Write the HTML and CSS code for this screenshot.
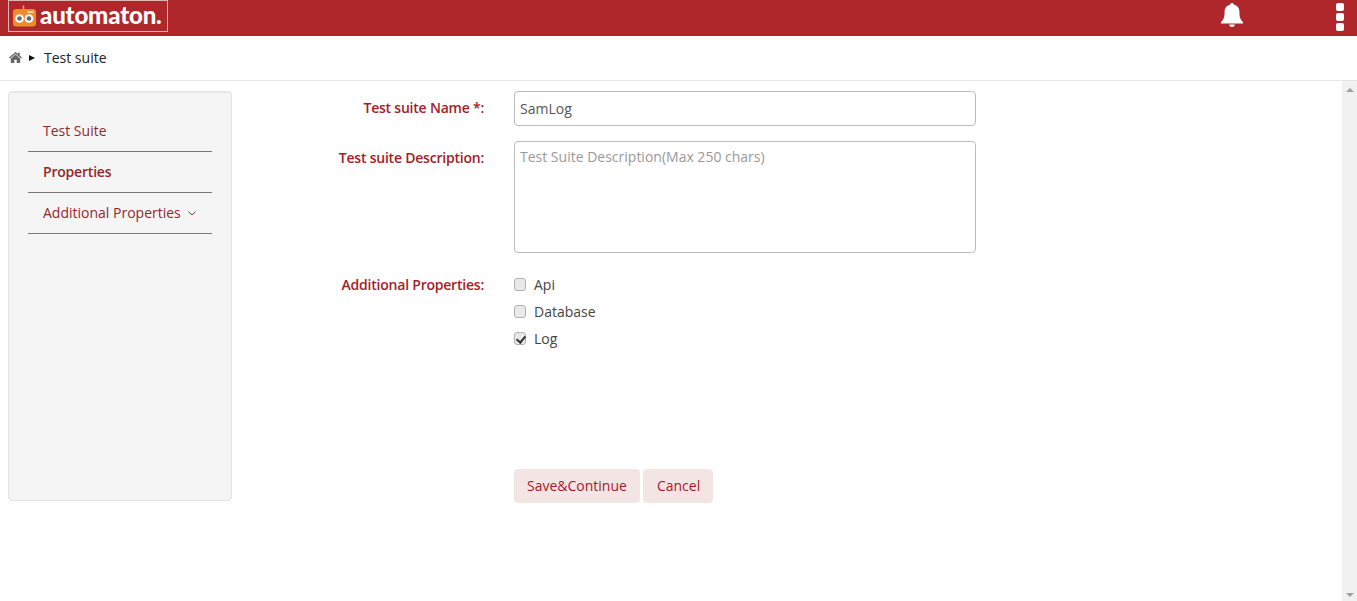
FILE: index.html
```html
<!DOCTYPE html>
<html lang="en">
<head>
<meta charset="utf-8">
<title>Test suite</title>
<link rel="stylesheet" href="styles.css">
</head>
<body>
<header class="topbar">
  <div class="logo">
    <svg class="logo-icon" width="24" height="22" viewBox="0 0 24 22">
      <path d="M10.500 5V.5" stroke="#f3b27a" stroke-width="1.4"/>
      <rect x="0" y="4" width="23" height="17.500" rx="3" fill="#ee8b2c"/>
      <rect x="14.500" y="6" width="6" height="2" fill="#f9d7b0"/>
      <circle cx="6.500" cy="13.500" r="4.300" fill="#fff"/>
      <circle cx="6.500" cy="13.500" r="2.300" fill="#666"/>
      <circle cx="16" cy="13.500" r="4.300" fill="#fff"/>
      <circle cx="16" cy="13.500" r="2.300" fill="#666"/>
    </svg>
    <span class="logo-text">automaton.</span>
  </div>
  <div class="topbar-actions">
    <svg class="bell" width="22" height="24" viewBox="0 0 22 24">
      <path d="M11 0c1.100 0 1.900.8 1.900 1.800 3.700.7 5.500 3.500 5.500 7.200 0 5.300 1.200 7.800 3.600 10v1.500H0V19c2.400-2.200 3.600-4.700 3.600-10 0-3.700 1.800-6.500 5.500-7.200C9.100.8 9.900 0 11 0z" fill="#fff"/>
      <path d="M8.200 21.500h5.600c0 1.500-1.200 2.500-2.800 2.500s-2.800-1-2.800-2.500z" fill="#fff"/>
    </svg>
    <div class="kebab"><i></i><i></i><i></i></div>
  </div>
</header>
<nav class="crumbs">
  <svg class="home" width="13" height="11" viewBox="0 0 13 11">
    <path d="M6.500 0L0 5.600l.8.9L6.500 1.700l5.700 4.800.8-.9-2.300-2V.8H9v1.300z" fill="#666"/>
    <path d="M6.500 2.600L1.800 6.500V11h3.500V7.700h2.400V11h3.500V6.500z" fill="#666"/>
  </svg>
  <span class="crumb-arrow"></span>
  <span class="crumb-text">Test suite</span>
</nav>
<div class="content">
  <main class="page">
    <aside class="side">
      <a class="side-item">Test Suite</a>
      <a class="side-item active">Properties</a>
      <a class="side-item">Additional Properties
        <svg class="chev" width="8" height="5" viewBox="0 0 8 5"><path d="M.5.7L4 4l3.500-3.300" fill="none" stroke="#8f2a3a" stroke-width="1"/></svg>
      </a>
    </aside>
    <form class="form">
      <div class="row row-name">
        <label class="lbl lbl-name">Test suite Name *:</label>
        <input class="input" type="text" value="SamLog">
      </div>
      <div class="row row-desc">
        <label class="lbl lbl-desc">Test suite Description:</label>
        <textarea class="input area" placeholder="Test Suite Description(Max 250 chars)"></textarea>
      </div>
      <div class="row row-props">
        <label class="lbl lbl-props">Additional Properties:</label>
        <div class="checks">
          <label class="check"><input type="checkbox">Api</label>
          <label class="check"><input type="checkbox">Database</label>
          <label class="check"><input type="checkbox" checked>Log</label>
        </div>
      </div>
      <div class="actions">
        <button type="button" class="btn">Save&amp;Continue</button>
        <button type="button" class="btn btn-cancel">Cancel</button>
      </div>
    </form>
  </main>
  <div class="scrollbar">
    <span class="sb-up"></span>
    <span class="sb-down"></span>
  </div>
</div>
</body>
</html>
```
FILE: styles.css
```css
* { box-sizing: border-box; }
html, body { margin: 0; height: 100%; overflow: hidden; }
body {
  font-family: "Open Sans", "Noto Sans", sans-serif;
  font-size: 14px;
  color: #333;
  background: #fff;
  height: 601px;
  display: flex;
  flex-direction: column;
}
.topbar {
  height: 36px;
  flex: none;
  background: #b0272b;
  display: flex;
  justify-content: space-between;
  padding-left: 8px;
}
.logo {
  width: 160px;
  height: 32px;
  border: 1px solid #dfb4b4;
  display: flex;
  align-items: center;
  padding: 0 0 2px 4px;
  gap: 3px;
}
.logo-icon { flex: none; align-self: flex-start; margin-top: 4px; }
.logo-text {
  font-family: Lato, "Liberation Sans", Arial, sans-serif;
  font-weight: 900;
  font-size: 24px;
  letter-spacing: -0.15px;
  color: #fff;
  line-height: 30px;
}
.topbar-actions {
  display: flex;
  align-items: flex-start;
}
.bell { margin-top: 3px; margin-right: 93px; }
.kebab {
  display: flex;
  flex-direction: column;
  gap: 2px;
  margin-top: 3px;
  margin-right: 13px;
}
.kebab i {
  display: block;
  width: 8px;
  height: 8px;
  border-radius: 2px;
  background: #fff;
}
.crumbs {
  height: 45px;
  flex: none;
  border-bottom: 1px solid #e5e5e5;
  display: flex;
  align-items: center;
  padding-left: 9px;
  padding-bottom: 1px;
}
.home { flex: none; }
.crumb-arrow {
  width: 0;
  height: 0;
  margin-left: 7px;
  border-left: 6px solid #111;
  border-top: 3px solid transparent;
  border-bottom: 3px solid transparent;
}
.crumb-text { margin-left: 9px; color: #222; }
.content { flex: 1; display: flex; min-height: 0; }
.page {
  flex: 1;
  display: flex;
  align-items: flex-start;
  padding: 10px 0 0 8px;
}
.side {
  width: 224px;
  height: 410px;
  flex: none;
  background: #f5f5f5;
  border: 1px solid #e3e3e3;
  border-radius: 4px;
  padding: 19px 19px 0;
  box-shadow: inset 0 1px 1px rgba(0,0,0,.05);
}
.side-item {
  display: block;
  height: 41px;
  line-height: 40px;
  padding-left: 15px;
  border-bottom: 1px solid #777;
  color: #92282e;
  white-space: nowrap;
}
.side-item.active { font-weight: 600; letter-spacing: -0.2px; }
.chev { margin-left: 4px; vertical-align: 2px; }
.form { margin-left: 30px; width: 714px; }
.row { display: flex; align-items: flex-start; }
.lbl {
  width: 222px;
  flex: none;
  margin-right: 30px;
  text-align: right;
  font-weight: 600;
  letter-spacing: -0.22px;
  color: #a32126;
  line-height: 20px;
  padding-top: 7px;
}
.lbl-props { padding-top: 0; }
.input {
  display: block;
  width: 462px;
  height: 35px;
  border: 1px solid #bbb;
  border-radius: 4px;
  padding: 0 5px;
  font: inherit;
  color: #555;
  background: #fff;
  outline: none;
}
.input::placeholder { color: #999; opacity: 1; }
.row-desc { margin-top: 15px; }
.area { height: 112px; padding: 5px 5px; resize: none; }
.row-props { margin-top: 22px; }
.checks { display: flex; flex-direction: column; gap: 7px; margin-top: -1px; }
.check {
  display: flex;
  align-items: center;
  height: 20px;
  color: #444;
}
.check input {
  appearance: none;
  position: relative;
  width: 12px;
  height: 13px;
  margin: 0 8px 0 0;
  background: #e9e9e9;
  border: 1px solid #b0b0b0;
  border-radius: 3px;
}
.check input:checked::after {
  content: "";
  position: absolute;
  left: 3px;
  top: 1px;
  width: 4px;
  height: 7px;
  border: solid #333;
  border-width: 0 2px 2px 0;
  transform: rotate(40deg);
}
.actions {
  margin-left: 252px;
  margin-top: 121px;
  display: flex;
  gap: 3px;
}
.btn {
  height: 34px;
  padding: 0 13px 2px;
  border: 0;
  border-radius: 4px;
  background: #f4e5e5;
  color: #a8182a;
  font: inherit;
}
.btn-cancel { padding: 0 13px 2px 14px; }
.scrollbar {
  width: 15px;
  flex: none;
  background: #f1f1f1;
  display: flex;
  flex-direction: column;
  justify-content: space-between;
  align-items: center;
  padding: 7px 0 4px;
}
.sb-up, .sb-down {
  width: 0;
  height: 0;
  border-left: 4px solid transparent;
  border-right: 4px solid transparent;
}
.sb-up { border-bottom: 4px solid #a0a0a0; }
.sb-down { border-top: 4px solid #a0a0a0; }
```
